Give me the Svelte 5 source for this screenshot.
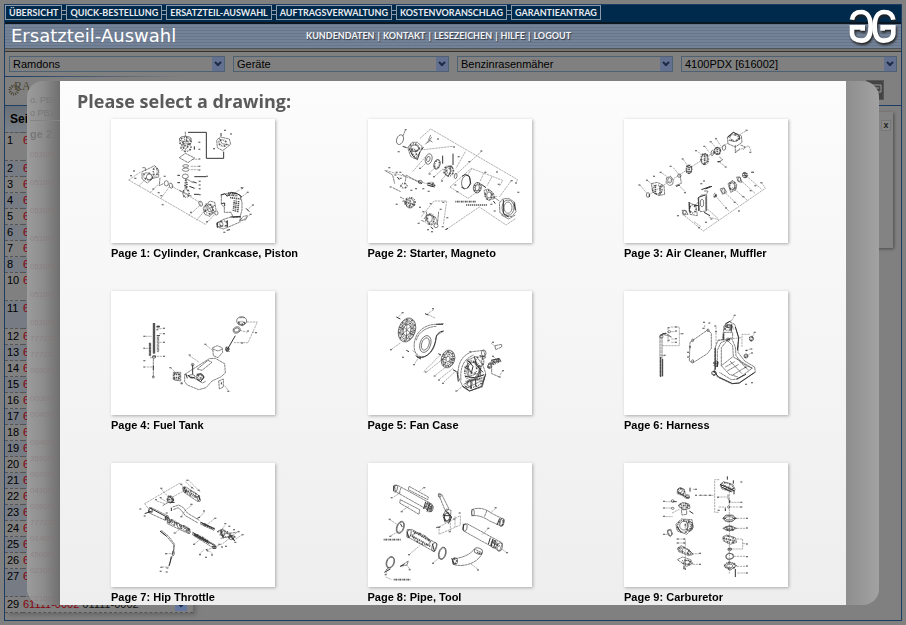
<script>
    const menu = ['ÜBERSICHT', 'QUICK-BESTELLUNG', 'ERSATZTEIL-AUSWAHL', 'AUFTRAGSVERWALTUNG', 'KOSTENVORANSCHLAG', 'GARANTIEANTRAG'];
    const submenu = ['KUNDENDATEN', 'KONTAKT', 'LESEZEICHEN', 'HILFE', 'LOGOUT'];
    const filters = [
        { id: 'brand', label: 'Marke', value: 'Ramdons' },
        { id: 'group', label: 'Gruppe', value: 'Geräte' },
        { id: 'type', label: 'Typ', value: 'Benzinrasenmäher' },
        { id: 'model', label: 'Modell', value: '4100PDX [616002]' }
    ];

    const positions = [1, 2, 3, 4, 5, 6, 7, 8, 10, 11, 12, 13, 14, 15, 16, 17, 18, 19, 20, 21, 22, 23, 24, 25, 26, 27];
    const tallRows = [1, 10, 11, 27];

    // part numbers shining through the dialog edge, tall ones take two lines
    const ghosts = [
        ['051000', true], ['051000', true], ['051000', true], ['051000', true], ['051000', true], ['051000', true],
        ['051000'], ['777228'], ['777227'], ['003000', true], ['003000'], ['004000', true], ['004000'], ['359000'],
        ['007000'], ['041000'], ['009000'], ['777228'], ['014000'], ['450000'], ['021003', true], ['021000']
    ];

    // thin: dashed leader lines, line: outlines, bold: heavy edges, hatch: ribbed surfaces
    // rings and parts are ellipses [cx, cy, rx, ry, angle], notes are callout numbers [x, y]
    const drawings = [
        {
            title: 'Cylinder, Crankcase, Piston',
            box: '15 12 492 372',
            thin: 'M68 195L298 328L328 296M68 195L105 170M98 213L115 196M132 233L158 207M165 250L190 215M248 302L285 268M272 316L300 282M196 213L285 264M400 225L378 240M422 235L400 250M440 270L424 285M434 298L402 322M258 133L276 133M254 154H276M254 164H276',
            line: 'M238 50V66M220 128L238 115L266 129L246 143ZM332 75L343 66L370 72L374 88L350 107L334 98ZM340 70L348 86L370 90M346 240V268L355 276V292L375 292L382 308L402 306L408 285V262L402 240L376 232ZM332 325L350 314L374 306L404 306L400 322L372 334L352 342L334 336ZM402 316L412 304L424 302L420 314ZM108 170L130 160L146 152L158 164V186L140 190L124 204L108 192ZM162 188L160 212L172 206M240 190V222M220 226L258 244M244 193L262 204M291 278L312 258L326 262L330 284L312 304L296 298ZM300 265L322 296M294 290L328 270M118 168V158H108',
            bold: 'M246 52H301V130H353V110M265 185H302M260 200L272 204M250 214L266 220M264 238H280M344 240L356 236L364 244L376 232L394 236L408 246M346 266L356 264V274M334 322V338M364 316V336M265 94V104M345 54V64M214 181H222M214 203H222M420 280L430 290M406 222L412 218M362 346L372 344M374 306L404 304',
            hatch: 'M362 240L394 242M372 248L404 252M385 256L382 288M391 257L388 290M398 258L395 292M366 234L388 236',
            rings: [[239, 153, 9, 4, 0], [239, 164, 10, 5, 0], [238, 184, 9, 7, 0], [181, 205, 6, 8, 0], [195, 212, 5, 8, -20], [284, 266, 5, 8, -20], [331, 294, 5, 6, 0], [238, 72, 18, 8, 0], [130, 186, 9, 9, 0], [342, 328, 9, 8, 0], [311, 280, 8, 11, -20]],
            parts: [[238, 80, 17, 12, 0], [240, 97, 15, 12, 0], [238, 88, 8, 14, 0], [350, 84, 12, 9, 20], [126, 184, 14, 10, 20], [148, 170, 6, 14, 0], [240, 235, 9, 12, 0], [309, 282, 12, 15, -20], [352, 326, 12, 8, 0], [240, 208, 3, 13, 0]],
            notes: [[357, 46], [375, 57], [280, 82], [280, 103], [280, 132], [280, 154], [280, 165], [303, 184], [281, 199], [281, 210], [281, 221], [281, 239], [84, 168], [88, 190], [75, 182], [142, 222], [158, 233], [166, 242], [170, 269], [255, 292], [303, 320], [407, 218], [425, 232], [441, 270], [434, 298], [355, 352], [176, 184], [324, 101]]
        },
        {
            title: 'Starter, Magneto',
            box: '18 12 492 372',
            thin: 'M174 70L206 42L467 194L462 202M184 104L272 94M360 108L278 182M264 216L328 160L422 196L412 214M264 216L318 250L352 226M252 344L352 276L432 330L462 310M178 305L216 258H254L244 330M72 166L200 208M330 160L316 182M365 175L354 200M390 185L375 212M447 198L412 246M310 110L282 160M152 170L190 126M178 158L196 140M200 175L222 156M218 184L245 160M238 195L256 175',
            line: 'M137 98L150 82L166 82L180 94L176 108L160 132L146 124ZM68 166L92 180L98 206M120 178L132 184L130 200M92 218L116 230M132 180L170 202M130 46L122 64M190 88L210 66M196 84L206 74M206 60L200 74L212 82M186 312L196 298L220 306L226 320L208 330L194 326M178 316L188 320M412 264L422 252L440 250L458 262L462 290L450 304L430 304L414 294ZM418 300L440 312L460 300M366 226L378 222L394 234L398 250L380 256L370 246ZM392 248L404 244M114 246L126 252M194 290L190 322M230 290L226 330M392 244L412 258',
            bold: 'M140 98L152 122L166 134L174 110M184 96L178 106M273 116V150M242 122V146M300 184L310 178L322 184L326 206L316 220M298 216L308 222M358 208L372 218M106 186L112 194M168 198L180 206M198 204L220 212M196 210L218 216M122 94L134 98M424 254V296L440 306M456 262L460 286M268 152L272 160M206 336L214 342M394 258L400 266M250 344L258 340',
            hatch: 'M280 260L342 260M312 270L376 270M122 258L158 270',
            rings: [[114, 74, 10, 15, 20], [200, 132, 10, 16, 15], [199, 132, 5, 8, 15], [225, 148, 9, 15, 15], [258, 168, 8, 14, 10], [312, 201, 13, 20, 10], [346, 218, 12, 16, 10], [346, 218, 6, 9, 10], [381, 240, 7, 9, 0], [438, 278, 18, 23, 0], [438, 278, 12, 17, 0], [144, 265, 12, 14, 0], [281, 183, 4, 8, 10], [175, 201, 6, 5, 0], [202, 310, 9, 12, 0], [222, 332, 6, 6, 0], [158, 100, 12, 10, 0]],
            parts: [[158, 97, 14, 10, 20], [156, 112, 6, 12, -20], [225, 148, 7, 13, 15], [260, 168, 14, 15, 0], [260, 168, 6, 9, 0], [144, 262, 15, 14, 0], [140, 264, 7, 8, 0], [126, 212, 9, 7, 0], [346, 218, 9, 13, 10], [380, 240, 10, 14, 0], [208, 208, 10, 5, 15], [206, 312, 10, 15, 0]],
            notes: [[131, 44], [228, 72], [276, 96], [322, 140], [110, 110], [174, 160], [203, 177], [216, 185], [240, 198], [82, 158], [104, 172], [115, 172], [116, 190], [86, 216], [100, 180], [184, 221], [162, 221], [200, 229], [104, 268], [174, 277], [206, 266], [244, 262], [236, 283], [184, 290], [170, 325], [198, 344], [210, 350], [242, 335], [256, 308], [280, 210], [286, 230], [370, 172], [405, 171], [449, 197], [462, 204], [469, 232], [410, 208], [388, 268], [398, 288], [358, 108], [290, 125], [148, 226]]
        },
        {
            title: 'Air Cleaner, Muffler',
            box: '18 12 492 372',
            thin: 'M92 240L330 84M192 296L256 348L442 220L430 202M228 320L250 336M272 306L302 314M268 282L302 312M292 242L334 290M316 228L362 272M342 216L388 256M366 194L412 236M384 182L430 222M186 215L202 230M305 142L322 154M166 158L184 180M132 174L148 186M196 134L208 150M240 110L254 124M262 96L274 112M280 82L292 96M296 74L308 92M352 110L392 92L400 110M66 210L86 234M90 198L108 212M384 48L366 58',
            line: 'M100 206L118 202L138 212L140 238L122 242L104 230ZM146 188L158 184L166 194L164 208L154 212L144 202ZM328 66L346 52L370 62L372 82L352 96L330 86ZM352 90V114L366 100M332 76L352 80L370 68M368 90L382 96L376 104M240 250L250 240H266V288L246 290ZM212 262L234 272L238 302L216 298ZM192 286L204 286L210 298L196 300ZM306 222L318 218L326 232L314 238ZM330 206L344 196L356 208L354 224L338 232ZM356 186L366 186L372 202L360 200ZM258 228H270L264 240M230 272L240 262M186 180L190 205L172 212M304 126L314 134L300 142',
            bold: 'M250 224L278 214M262 222L282 214M330 66L346 52M346 52L364 62V74M242 246V288M264 244V286M244 246L262 240M214 262V290M228 270L240 272M298 140H308M174 214L186 210M292 238L294 246M258 292L276 302M94 238V246M380 178L388 186M400 172H408',
            hatch: 'M112 210V238M126 214V240M213 150V178M260 116V152M298 96V120M381 174V188',
            rings: [[90, 240, 5, 7, 0], [184, 182, 5, 5, 0], [155, 196, 6, 8, 0], [213, 164, 8, 12, 10], [259, 132, 9, 16, 10], [298, 108, 9, 11, 10], [318, 98, 5, 8, 10], [283, 114, 4, 8, 10], [316, 228, 5, 7, 0], [364, 193, 4, 6, 0], [200, 292, 5, 5, 0], [252, 264, 5, 12, 0], [342, 214, 8, 11, 0], [380, 180, 7, 8, 0]],
            parts: [[118, 224, 14, 13, 0], [213, 162, 8, 12, 0], [260, 132, 11, 16, 0], [298, 108, 9, 10, 0], [344, 212, 9, 12, 0], [348, 68, 14, 9, 10], [382, 180, 6, 7, 0], [224, 282, 9, 12, 0], [291, 241, 3, 5, 0]],
            notes: [[64, 210], [87, 196], [108, 184], [128, 172], [158, 154], [194, 132], [234, 107], [259, 94], [278, 80], [294, 71], [386, 46], [397, 112], [323, 156], [201, 233], [132, 213], [250, 206], [258, 198], [403, 172], [430, 203], [180, 302], [243, 338], [264, 322], [280, 312], [324, 279], [350, 262], [376, 245], [398, 227], [363, 288], [412, 212]]
        },
        {
            title: 'Fuel Tank',
            box: '15 12 492 372',
            thin: 'M422 105H454L426 167H382M402 130L424 136M438 136H450M250 206L280 226M300 174L322 192M194 242L208 256M356 296L368 312M118 148H138M120 184H132M122 240H138M152 208H170M160 125H170M160 140H170M160 166H170M132 212H142',
            line: 'M236 262L310 215L328 214L356 230L358 258L344 270L318 282L300 302L278 308L244 294L236 284ZM236 262L262 272L290 288L300 282M274 246L306 220L318 226L288 250ZM320 182L334 176L348 182L350 196L336 212L322 206ZM320 186L336 192L350 186M338 282L352 276V300L340 306ZM154 150V194H158V150ZM400 92H416M396 108L410 116L420 106M202 256H224V282L202 278ZM130 168V206H134V168ZM142 214V270M360 180L370 194L360 192Z',
            bold: 'M142 108V200M146 108V200M132 168V206M260 232V262M388 146L366 184M142 236V248M240 262L244 274M246 264L254 272H266M152 118H162M152 146H162M272 262L286 260L294 270L284 284L272 276M366 182L362 190M224 288H230M346 286V292',
            hatch: 'M204 262H222M204 272H222M140 208H150',
            rings: [[407, 102, 15, 13, 0], [392, 129, 11, 9, -20], [392, 129, 8, 6, -20], [282, 270, 12, 8, 0], [258, 268, 9, 5, 0], [260, 233, 4, 4, 0], [156, 120, 4, 3, 0], [144, 210, 5, 4, 0], [142, 270, 3, 3, 0], [364, 186, 5, 6, 0]],
            parts: [[212, 268, 9, 11, 0], [282, 269, 8, 4, 0], [406, 108, 9, 4, 0], [364, 186, 4, 5, 0]],
            notes: [[174, 124], [174, 140], [174, 166], [174, 208], [115, 148], [115, 184], [115, 221], [115, 240], [251, 204], [298, 172], [193, 242], [227, 290], [367, 313], [426, 132], [450, 137], [408, 168], [154, 128]]
        },
        {
            title: 'Fan Case',
            box: '785 12 492 372',
            thin: 'M888 78L876 90M982 68L964 80M964 82L988 94M882 168L854 188M918 190L934 202M934 216L924 232M952 254L1002 204M962 254L1012 214M988 264L1024 236M1000 276L1040 244M1012 286L1048 252M1154 168L1168 180M1160 208L1176 224M1190 250L1180 266M1052 312L1070 296',
            line: 'M1012 110L986 112C952 114 928 136 924 168C920 200 936 214 956 208C984 196 988 168 990 146L1012 132M930 160C934 140 956 120 990 118M1166 176L1186 172V180L1168 188ZM1144 242C1146 224 1160 216 1182 218L1184 224C1166 222 1152 230 1150 244ZM1156 236V260L1180 270M1070 300L1056 270C1052 232 1066 204 1098 194L1132 190L1138 212L1124 220L1138 258L1128 300L1088 312ZM1064 280C1060 242 1072 216 1102 204M1072 292L1134 262M1080 304L1136 276M1082 220L1110 208L1126 230L1120 258L1088 268ZM886 116L918 142M888 142L916 114M902 98L900 160',
            bold: 'M928 206C950 222 980 200 988 160C990 140 998 134 1012 132M932 210L944 216M1070 298L1090 312L1126 298L1138 262M1084 220L1100 238L1094 262M1104 208L1110 234L1130 256M1074 240L1092 250M1076 268L1104 272L1132 264M1120 206L1136 210M870 90L882 96M956 80L966 84M900 190L908 194M1040 248L1050 254M996 200L1004 204M1108 276V298M1094 284V306M1144 240H1152M1154 220L1180 214M990 112H1010M1052 252L1056 284',
            hatch: 'M1078 284L1132 272M1146 232L1182 220M1122 238V266',
            rings: [[902, 129, 25, 37, 18], [902, 129, 18, 28, 18], [902, 129, 11, 17, 18], [957, 171, 16, 26, 18], [957, 171, 11, 19, 18], [1025, 216, 20, 27, 15], [1025, 216, 6, 8, 15], [1025, 216, 14, 20, 15], [1100, 250, 18, 24, 15], [1132, 198, 7, 9, 0], [1150, 238, 6, 6, 0], [1090, 290, 8, 8, 0]],
            parts: [[902, 129, 22, 33, 18], [902, 129, 14, 22, 18], [1025, 216, 17, 23, 15], [1025, 216, 10, 14, 15], [1098, 252, 22, 28, 15], [1098, 240, 12, 20, -20], [1102, 290, 26, 10, -15], [1120, 224, 12, 15, 0], [1168, 225, 14, 4, -25]],
            notes: [[889, 77], [980, 65], [854, 188], [890, 211], [923, 233], [958, 255], [985, 267], [998, 279], [1010, 289], [1050, 312], [1160, 166], [1160, 208], [1190, 251], [1180, 270], [1092, 194]]
        },
        {
            title: 'Harness',
            box: '18 12 492 372',
            thin: 'M158 120H184V176H132M184 140H192M150 122V168M372 180V142H396M348 88L338 106M410 136L402 152M140 206H128M294 120V172M260 114V126M300 160L370 152M384 192L396 186M384 208L400 198M160 134H172M160 156H172M160 166H172',
            line: 'M126 268V150L136 142L160 150L142 138L128 144M132 268V150M216 166L270 128L280 140V184L268 200L224 228L214 222ZM290 250V186L300 160L314 158L318 116L334 104L350 112L362 152L360 196L380 222L410 240L412 256L362 288L340 290L298 270ZM298 240V190L308 168L340 152L352 180L354 206L374 230L402 244L360 276L340 278L304 256M310 236V182L328 160L344 176L346 208L310 236M318 158V136L344 136V154M318 130L324 114L342 112L346 128M310 236L334 262L360 270M346 210L404 244M328 252L362 232M344 264L384 240M322 240L350 224M336 222L372 260M356 214L392 250',
            bold: 'M128 210V270M134 216V268M126 148L134 140L144 140M292 182V248M286 252L302 270L344 290L364 288L410 256M316 160V140M340 134V114M322 110L338 102M298 222V240M326 160L336 156M352 120L362 152L358 190M356 276L384 262M382 190H388M380 242L386 240M324 120L340 124',
            hatch: 'M320 118L342 116M290 230H302',
            rings: [[224, 160, 3, 4, 0], [270, 130, 3, 4, 0], [224, 222, 3, 4, 0], [400, 155, 6, 7, 0], [384, 207, 6, 6, 0], [288, 258, 7, 6, 0], [330, 158, 5, 5, 0], [154, 134, 4, 3, 0], [130, 148, 5, 5, 0], [216, 180, 2, 3, 0]],
            parts: [[330, 122, 10, 8, 0], [288, 259, 6, 5, 0], [400, 155, 5, 5, 0], [384, 207, 4, 4, 0], [294, 230, 6, 8, 0]],
            notes: [[174, 120], [174, 132], [174, 155], [174, 166], [193, 140], [140, 205], [258, 106], [274, 108], [256, 124], [292, 117], [294, 134], [350, 85], [410, 136], [400, 186], [402, 198], [384, 292], [402, 287], [210, 196], [210, 210], [152, 122], [152, 160]]
        },
        {
            title: 'Hip Throttle',
            box: '15 18 492 372',
            thin: 'M116 140L222 78L232 92M116 140L128 156M152 132L176 140M164 124L184 136M166 96L188 122M246 68L284 106M238 74L266 98M200 120L240 98M226 178L238 160L260 142M296 164L278 184M326 184L300 206M356 206L340 226M398 222L350 260L300 280M410 232L384 250M320 292L304 276M208 228L224 214M264 262L286 244M180 290H198M280 292L294 278M168 330H188',
            line: 'M128 160L136 152L184 176L178 190L130 168ZM232 92L240 90L282 118L276 134L234 106ZM184 184L252 216L248 230L184 200ZM260 226L328 264L324 274L260 234ZM200 150L218 144L232 152L244 168L280 190M202 158L216 152L226 160L238 176L276 198M284 196L326 214L324 220L284 202ZM162 222L182 238L202 262L204 276L198 294M166 220L186 236L206 262L200 298M198 300L188 328M336 222L352 216L370 236L386 250M340 234L360 230L392 226M344 244L380 236M170 146L190 134',
            bold: 'M130 152L186 182M128 160V168M178 178V190M116 170L138 162M190 136H206M234 90L240 108M278 114L282 130M284 196L326 216M262 228L326 266M318 268H330V274H320M264 234L310 260M162 222L182 238M196 298L190 326M186 116L204 130M196 152V162M274 184L282 180M344 218L352 244M370 230L386 252M300 276L306 284',
            hatch: 'M188 190L212 200M220 204L250 220M240 100L276 122M264 232L304 252M288 200L322 216M182 126L206 130',
            rings: [[134, 160, 5, 8, -20], [236, 98, 5, 9, -20], [278, 126, 4, 8, -20], [193, 128, 9, 10, 0], [188, 190, 4, 9, -20], [218, 206, 4, 9, -20], [248, 222, 4, 8, -20], [202, 288, 3, 7, 0], [350, 228, 7, 9, 0], [376, 242, 7, 6, 0], [184, 182, 4, 6, 0]],
            parts: [[193, 127, 8, 9, 0], [258, 110, 19, 6, 27], [200, 196, 13, 6, 27], [236, 214, 13, 6, 27], [285, 242, 22, 3, 27], [360, 232, 15, 8, 20], [298, 204, 8, 2, 25], [378, 240, 8, 5, 0]],
            notes: [[103, 156], [116, 177], [150, 128], [164, 122], [166, 94], [226, 82], [244, 70], [258, 92], [278, 100], [256, 142], [226, 179], [294, 162], [328, 184], [206, 228], [182, 168], [264, 262], [180, 290], [166, 331], [184, 333], [164, 343], [182, 345], [358, 200], [370, 208], [384, 218], [398, 224], [410, 233], [388, 256], [348, 270], [360, 268], [318, 294], [300, 301], [282, 293], [336, 224], [340, 262]]
        },
        {
            title: 'Pipe, Tool',
            box: '785 18 492 372',
            thin: 'M862 120L884 106M886 162L908 148M952 92L938 104M850 188L872 202M854 236L880 222M910 292L940 266M980 318L1002 300M998 210L1062 176V204L998 232ZM1032 188V222M1046 178V210M1168 154L1152 168M1146 214L1126 234M1200 286L1184 274M1114 336L1090 318M838 352L846 332M910 336L900 322M838 360L856 368',
            line: 'M864 84L876 86L978 142L974 164L868 104ZM908 88L966 120L964 128L906 98ZM882 128L940 158L938 172L880 138ZM996 110L1006 112L1028 156L1018 164ZM1020 156L1034 160L1032 188L1016 196L1010 176ZM1096 158C1118 150 1136 154 1158 170L1194 188L1186 208L1150 192C1132 180 1116 174 1096 176ZM1070 202L1082 200L1188 258L1180 282L1072 222ZM902 218L918 218L992 260L984 284L904 240ZM1038 306C1060 304 1090 296 1104 276L1128 288C1114 320 1070 332 1040 322ZM882 328L906 312L902 324ZM838 340L848 330M884 92L878 110M964 134L956 154M1160 244L1152 266M1142 160L1134 180',
            bold: 'M862 86V102M958 134L952 156M970 142L962 164M1014 176H1034M1018 160L1036 180L1026 200M1012 170L1016 192M1152 242L1146 262M1160 246L1154 268M1168 250L1162 272M1180 184L1172 204M1072 202L1070 218M882 200L888 210M834 346L852 336M990 212L1002 210M882 328L894 322M1036 304L1044 322M902 224L908 242M978 260L984 282',
            hatch: 'M832 248H884M862 368H912M920 222L974 254M912 234L972 268M1156 254L1180 268M962 140L976 154M1112 286L1126 292',
            rings: [[868, 95, 5, 11, 15], [970, 153, 7, 12, 15], [976, 155, 4, 10, 15], [882, 211, 9, 17, 20], [882, 211, 11, 19, 20], [1008, 289, 9, 17, 15], [1008, 289, 11, 19, 15], [852, 316, 10, 16, 20], [852, 316, 12, 18, 20], [908, 230, 6, 13, 15], [984, 270, 7, 14, 15], [1076, 212, 6, 11, 15], [1180, 270, 8, 13, 15], [1186, 196, 7, 12, 15], [1116, 282, 13, 9, 15], [1046, 312, 8, 10, 0], [1022, 180, 8, 11, 0], [1000, 116, 4, 5, 0], [1100, 167, 4, 10, 0]],
            parts: [[945, 246, 28, 13, 30], [1164, 262, 8, 11, 20], [966, 148, 7, 9, 0], [1022, 180, 9, 13, 0], [1186, 196, 5, 9, 0], [1046, 312, 5, 7, 0]],
            notes: [[856, 122], [886, 164], [954, 92], [850, 187], [852, 238], [908, 293], [980, 319], [1060, 168], [1030, 224], [1168, 152], [1146, 214], [1202, 287], [1115, 339], [838, 353], [910, 338], [994, 211], [1044, 186]]
        },
        {
            title: 'Carburetor',
            box: '18 18 492 372',
            thin: 'M304 68H290V166H302M242 115H290M224 97H236M142 134H162M142 153H162M142 179H164M162 168L186 156M142 232H152M178 246H200M178 258H200M222 290H244M224 322H244M340 136H370M336 150H370M302 150H322V160M356 184H384M356 214H384M356 246H374V276H342M374 260H384M348 298H384M356 328H384M358 348H384M202 250V338M334 84V350M298 120H328',
            line: 'M178 98L186 92L198 96L202 112L216 122L204 124L188 112L178 110ZM180 146L194 136L214 142L216 154L196 158ZM190 158H206V172L192 174ZM174 202L190 186L222 188L226 212L206 232L178 222ZM148 220L158 216L164 232L156 238ZM178 274L190 266L216 282L226 292L212 296L182 284ZM178 308L194 300L218 308L224 320L206 328ZM306 84L316 74L344 82L352 98L340 104L312 96ZM314 184L324 174H344L354 184L342 194H324ZM314 214L334 206L356 214L334 222ZM314 240L326 234L352 242L356 256L336 262L316 252ZM318 326L334 314L356 326L336 340ZM324 296L332 288L346 292V302L332 308L324 304ZM330 112V126L336 130V138',
            bold: 'M216 92V104M214 162L226 170M176 134H164M328 58V68M346 70V80M334 130V138M322 154V162M352 336V360M198 326V336M200 334L204 338M184 108L212 124M306 82L350 102M316 184H324M344 184H356M330 276H342M196 246H202M196 258H202M348 100V112M310 90L340 104M178 208L186 222',
            hatch: 'M314 84L346 98M326 216H344M190 146H212M318 244L350 252',
            rings: [[186, 100, 7, 7, 0], [208, 118, 6, 5, 0], [164, 132, 4, 4, 0], [164, 154, 4, 3, 0], [198, 206, 13, 13, 0], [216, 208, 8, 14, 0], [188, 278, 6, 5, 0], [214, 288, 6, 5, 0], [208, 316, 8, 6, 0], [334, 184, 17, 9, 0], [334, 184, 12, 5, 0], [335, 214, 9, 6, 0], [335, 298, 11, 9, 0], [335, 327, 9, 6, 0], [335, 277, 6, 4, 0], [332, 150, 3, 4, 0], [155, 228, 6, 9, -15]],
            parts: [[190, 104, 9, 9, 0], [198, 146, 14, 7, 0], [198, 208, 20, 18, 0], [212, 206, 10, 14, 0], [200, 280, 18, 7, 25], [206, 316, 13, 6, 10], [328, 88, 19, 9, 20], [335, 214, 15, 6, 0], [334, 247, 17, 9, 15], [336, 326, 16, 9, 0]],
            notes: [[234, 97], [138, 133], [138, 153], [138, 178], [138, 232], [179, 246], [179, 258], [246, 289], [246, 322], [370, 75], [370, 136], [370, 150], [387, 184], [387, 213], [387, 261], [387, 299], [387, 327], [387, 348], [300, 121], [302, 160], [199, 335], [234, 115], [248, 115], [262, 115], [276, 115]]
        }
    ];
</script>

<svelte:head>
    <title>Ersatzteil-Auswahl</title>
</svelte:head>

<div class="frame">
    <nav class="menu">
        {#each menu as item}
            <a href="#menu">{item}</a>
        {/each}
    </nav>

    <header>
        <h1>Ersatzteil-Auswahl</h1>
        <nav class="submenu">
            {#each submenu as item, i}
                {#if i > 0}<span>|</span>{/if}<a href="#submenu">{item}</a>
            {/each}
        </nav>
        <svg class="logo" viewBox="744 24 156 120" role="img" aria-label="GG">
            <path d="M880 59C878 43 867 36 852 36C832 36 824 56 824 80C824 106 833 122 852 122C869 122 880 114 880 100V82H848V92" />
            <path d="M756 59C758 43 769 36 784 36C804 36 812 56 812 80C812 106 803 122 784 122C767 122 756 114 756 100V82H788V92" />
        </svg>
    </header>

    <form class="filters">
        {#each filters as filter}
            <div class="filter">
                <select id={filter.id} aria-label={filter.label}>
                    <option>{filter.value}</option>
                </select>
                <svg viewBox="0 0 12 12" aria-hidden="true"><path d="M3 4L6 7L9 4" /></svg>
            </div>
        {/each}
    </form>

    <div class="brand">
        <svg class="gear" viewBox="0 0 30 24" aria-hidden="true">
            <circle cx="6" cy="12" r="4" />
            <text x="6" y="12">RA</text>
        </svg>
        <button class="print" aria-label="Drucken">
            <svg viewBox="0 0 16 16"><path d="M2 4H14V11H2ZM4 7H12" /></svg>
        </button>
    </div>

    <div class="workspace">
        <table>
            <thead>
                <tr><th colspan="2">Sei</th></tr>
            </thead>
            <tbody>
                {#each positions as position}
                    <tr class:tall={tallRows.includes(position)}>
                        <td class="position">{position}</td>
                        <td class="number">6</td>
                    </tr>
                {/each}
                <tr>
                    <td class="position">29</td>
                    <td class="number">61111-0002 <span>61111-0002</span>
                        <svg viewBox="0 0 12 12" aria-hidden="true"><path d="M3 4L6 7L9 4" /></svg>
                    </td>
                </tr>
            </tbody>
        </table>
        <aside>
            <button aria-label="Schließen">x</button>
        </aside>
    </div>
</div>

<div class="dialog" role="dialog" aria-labelledby="dialog-title">
    <div class="edge left" aria-hidden="true">
        <p class="first">o. PB2</p>
        <p class="second">o PB2</p>
        <p class="third">ge 2:</p>
        {#each ghosts as [number, tall]}
            <p class="ghost" class:tall>{number}</p>
        {/each}
    </div>
    <main>
        <h2 id="dialog-title">Please select a drawing:</h2>
        <div class="drawings">
            {#each drawings as drawing, i}
                <a href="#page-{i + 1}">
                    <svg viewBox={drawing.box} aria-hidden="true">
                        <path class="thin" d={drawing.thin} />
                        <path class="hatch" d={drawing.hatch} />
                        {#each drawing.parts as [cx, cy, rx, ry, angle]}
                            <ellipse class="part" {cx} {cy} {rx} {ry} transform="rotate({angle} {cx} {cy})" />
                        {/each}
                        {#each drawing.rings as [cx, cy, rx, ry, angle]}
                            <ellipse class="ring" {cx} {cy} {rx} {ry} transform="rotate({angle} {cx} {cy})" />
                        {/each}
                        <path class="line" d={drawing.line} />
                        <path class="bold" d={drawing.bold} />
                        {#each drawing.notes as [x, y]}
                            <rect class="note" x={x - 3} y={y - 2} width="6" height="4" />
                        {/each}
                    </svg>
                    <span>Page {i + 1}: {drawing.title}</span>
                </a>
            {/each}
        </div>
    </main>
    <div class="edge right"></div>
</div>

<style>
    :global(body) {
        background: #808080;
        font-family: "Liberation Sans", Arial, sans-serif;
        overflow: hidden;
    }

    a {
        color: inherit;
        text-decoration: none;
    }

    .frame {
        box-sizing: border-box;
        height: calc(100vh - 8px);
        margin: 4px 4px 0;
        border: 1px solid #1c3c63;
        overflow: hidden;
    }

    .menu {
        display: flex;
        gap: 4px;
        height: 17px;
        background: #002a4c;
        border-bottom: 2px solid #0a1622;
    }

    .menu a {
        position: relative;
        box-sizing: border-box;
        height: 15px;
        padding: 0 3px;
        border: 1px solid #8d9aa8;
        color: #e8ecf0;
        font: bold 9px/14px Lato, sans-serif;
        white-space: nowrap;
    }

    .menu a + a::before {
        content: "";
        position: absolute;
        left: -5px;
        top: 4px;
        width: 4px;
        height: 3px;
        border: solid #8d9aa8;
        border-width: 1px 0;
    }

    header {
        position: relative;
        display: flex;
        align-items: center;
        height: 24px;
        padding: 0 6px;
        background: repeating-linear-gradient(#68768b 0 1px, #748297 1px 3px);
        border-bottom: 1px solid #4d545c;
        box-shadow: 0 2px 0 #77736b, 0 3px 0 #333;
        color: #fff;
    }

    h1 {
        flex: 0 0 295px;
        margin: 0;
        font: 18px/24px "DejaVu Sans", Verdana, sans-serif;
    }

    .submenu {
        display: flex;
        gap: 3px;
        font: bold 9px/24px Lato, sans-serif;
        color: #f2f4f7;
        text-shadow: 1px 1px 1px #333c4a;
    }

    .logo {
        position: absolute;
        right: 1px;
        top: -16px;
        width: 52px;
        height: 40px;
        overflow: visible;
        filter: drop-shadow(1px 2px 1px #222);
    }

    .logo path {
        fill: none;
        stroke: #fff;
        stroke-width: 14;
    }

    .filters {
        display: grid;
        grid-template-columns: repeat(4, 1fr);
        gap: 8px;
        padding: 7px 4px 4px;
    }

    .filter {
        position: relative;
        height: 16px;
    }

    select {
        display: block;
        width: 100%;
        height: 16px;
        padding: 0 3px;
        appearance: none;
        background: transparent;
        border: 1px solid #4e6172;
        border-radius: 0;
        color: #000;
        font: 11px/14px "Liberation Sans", Arial, sans-serif;
    }

    .filter svg {
        position: absolute;
        right: 1px;
        top: 1px;
        width: 12px;
        height: 14px;
        background: #63708f;
        pointer-events: none;
    }

    .filter path, td path {
        fill: none;
        stroke: #1c2a45;
        stroke-width: 2;
    }

    .brand {
        display: flex;
        justify-content: space-between;
        height: 29px;
        border-bottom: 1px solid #1c3c63;
        background: linear-gradient(90deg, #1c3c63, #808080 180px) top / 100% 1px no-repeat;
    }

    .gear {
        width: 30px;
        height: 24px;
        margin: 2px 3px;
    }

    .gear circle {
        fill: none;
        stroke: #4c4735;
        stroke-width: 3;
        stroke-dasharray: 1 1;
    }

    .gear text {
        fill: #4c4735;
        font: 12px "Liberation Serif", serif;
    }

    .print {
        width: 18px;
        height: 20px;
        margin: 4px 17px 0 0;
        padding: 0;
        background: #444;
        border: 1px solid #555;
    }

    .print path {
        fill: none;
        stroke: #999;
    }

    .workspace {
        display: flex;
        justify-content: space-between;
        align-items: flex-start;
    }

    table {
        width: 188px;
        border-collapse: collapse;
        box-shadow: 3px 2px 4px #666;
        font-size: 11px;
        line-height: 15px;
    }

    th {
        height: 26px;
        padding: 0 5px;
        background: linear-gradient(#686f76, #7b8188);
        font-size: 12px;
        text-align: left;
    }

    tbody tr {
        height: 16px;
        vertical-align: top;
    }

    tbody tr.tall {
        height: 28px;
    }

    tbody tr:nth-child(even) {
        background: #767b84;
    }

    td {
        padding: 0;
        border-top: 1px dashed #555;
    }

    tbody tr:last-child td {
        border-bottom: 1px dashed #555;
    }

    .position {
        width: 16px;
        padding-left: 2px;
    }

    .number {
        color: #86000f;
        white-space: nowrap;
    }

    .number span {
        color: #111;
    }

    td svg {
        float: right;
        width: 12px;
        height: 12px;
        margin: 2px 6px 0 0;
        background: #63779f;
    }

    aside {
        box-sizing: border-box;
        width: 60px;
        height: 136px;
        margin: 6px 8px 0 0;
        padding: 2px;
        background: #838383;
        box-shadow: 1px 1px 3px #4a4a4a;
        text-align: right;
    }

    aside button {
        width: 10px;
        height: 11px;
        padding: 0;
        background: #888;
        border: 1px solid #777;
        color: #222;
        font: bold 9px/8px "Liberation Sans", Arial, sans-serif;
    }

    .dialog {
        position: fixed;
        inset: 81px 27px 20px;
        display: flex;
        overflow: hidden;
        border-radius: 16px;
    }

    .edge {
        flex: 0 0 33px;
        overflow: hidden;
    }

    .left {
        box-sizing: border-box;
        padding-left: 3px;
        background: linear-gradient(90deg, #9c9c9c, #8c8c8c 50%, #6f6f6f);
    }

    .right {
        background: linear-gradient(90deg, #8e8e8e, #a2a2a2);
    }

    .edge p {
        margin: 0;
        color: #777;
        font-size: 9px;
        line-height: 16px;
        white-space: nowrap;
    }

    .edge .first {
        padding-top: 12px;
        line-height: 14px;
    }

    .edge .second {
        border-bottom: 1px solid #848484;
        line-height: 13px;
    }

    .edge .third {
        font-size: 11px;
        font-weight: bold;
        line-height: 26px;
    }

    .edge .ghost {
        color: #886f72;
        font-size: 8px;
        opacity: 0.5;
    }

    .edge .tall {
        padding-bottom: 12px;
    }

    main {
        flex: 1;
        overflow: hidden;
        background: linear-gradient(#fcfcfc, #eee);
    }

    h2 {
        margin: 8px 0 6px 17px;
        color: #5a5a5a;
        font: bold 18px/24px "Open Sans", sans-serif;
    }

    .drawings {
        display: grid;
        grid-template-columns: repeat(3, 164px);
        justify-content: space-between;
        row-gap: 28px;
        padding: 0 58px 0 51px;
    }

    .drawings a {
        display: block;
        color: #000;
        font-size: 11px;
        font-weight: bold;
        line-height: 20px;
        white-space: nowrap;
    }

    .drawings svg {
        display: block;
        width: 164px;
        height: 124px;
        background: #fff;
        box-shadow: 1px 1px 3px #aaa;
    }

    .drawings path, .drawings ellipse {
        fill: none;
        stroke: #444;
    }

    .drawings .thin {
        stroke: #888;
        stroke-width: 2;
        stroke-dasharray: 7 2;
    }

    .drawings .line {
        stroke-width: 2;
        stroke-dasharray: 9 1;
    }

    .drawings .bold {
        stroke: #333;
        stroke-width: 3;
    }

    .drawings .ring {
        stroke-width: 2;
    }

    .drawings .part {
        stroke: #555;
        stroke-width: 5;
        stroke-dasharray: 2 3 5 2 1 3;
    }

    .drawings .hatch {
        stroke: #555;
        stroke-width: 5;
        stroke-dasharray: 3 2 5 2;
    }

    .note {
        fill: #777;
    }
</style>
